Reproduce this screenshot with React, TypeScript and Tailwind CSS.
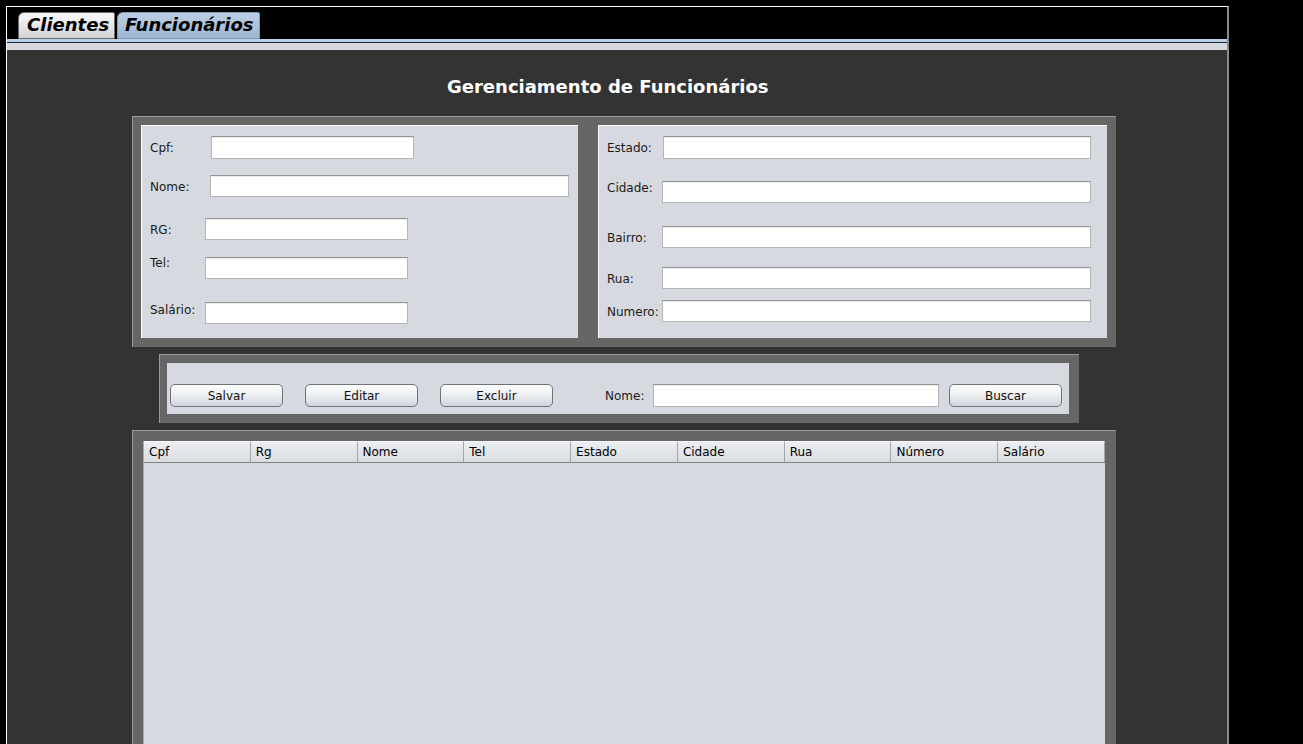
import * as React from 'react';

type Row = {
	label: string;
	row: string;
	labelCls: string;
	inputCls: string;
};

const leftRows: Row[] = [
	{ label: 'Cpf:', row: 'mt-[10px]', labelCls: 'w-[61px] mt-[5px]', inputCls: 'w-[203px] h-[23px]' },
	{ label: 'Nome:', row: 'mt-[16px]', labelCls: 'w-[60px] mt-[5px]', inputCls: 'w-[359px] h-[22px]' },
	{ label: 'RG:', row: 'mt-[21px]', labelCls: 'w-[55px] mt-[5px]', inputCls: 'w-[203px] h-[22px]' },
	{ label: 'Tel:', row: 'mt-[17px]', labelCls: 'w-[55px] -mt-[1px]', inputCls: 'w-[203px] h-[22px]' },
	{ label: 'Salário:', row: 'mt-[23px]', labelCls: 'w-[55px] mt-[1px]', inputCls: 'w-[203px] h-[22px]' }
];

const rightRows: Row[] = [
	{ label: 'Estado:', row: 'mt-[10px]', labelCls: 'w-[56px] mt-[5px]', inputCls: 'w-[428px] h-[23px]' },
	{ label: 'Cidade:', row: 'mt-[22px]', labelCls: 'w-[55px] mt-[0px]', inputCls: 'w-[429px] h-[22px]' },
	{ label: 'Bairro:', row: 'mt-[23px]', labelCls: 'w-[55px] mt-[5px]', inputCls: 'w-[429px] h-[22px]' },
	{ label: 'Rua:', row: 'mt-[19px]', labelCls: 'w-[55px] mt-[5px]', inputCls: 'w-[429px] h-[22px]' },
	{ label: 'Numero:', row: 'mt-[11px]', labelCls: 'w-[55px] mt-[5px]', inputCls: 'w-[429px] h-[22px]' }
];

const columns = ['Cpf', 'Rg', 'Nome', 'Tel', 'Estado', 'Cidade', 'Rua', 'Número', 'Salário'];

const inputBase =
	'border border-[#b5b5b5] border-t-[#939393] bg-white shadow-[inset_0_1px_0_#ececec]';

const buttonBase =
	'h-[23px] w-[113px] rounded-[5px] border border-[#6e737a] bg-linear-to-b from-[#fdfdfd] via-[#eceef1] to-[#d0d4da] pt-[1px] text-center text-[12px] leading-[20px] text-[#111]';

const FormRows: React.FC<{ rows: Row[] }> = ({ rows }) => (
	<>
		{rows.map((r) => (
			<div key={r.label} className={`flex items-start ${r.row}`}>
				<div className={`shrink-0 text-[12px] leading-[14px] text-[#1a1a1a] ${r.labelCls}`}>
					{r.label}
				</div>
				<div className={`${inputBase} ${r.inputCls}`} />
			</div>
		))}
	</>
);

const App: React.FC = () => {
	return (
		<div className="h-[744px] w-[1303px] overflow-hidden bg-black font-['DejaVu_Sans',sans-serif]">
			<div className="ml-[6px] mt-[6px] flex h-[738px] w-[1223px] flex-col border-l border-t border-white border-r-2 border-r-[#8a8a8a]">
				{/* tabs */}
				<div className="flex h-[32px] items-end gap-[2px] pl-[11px]">
					<div className="h-[27px] w-[97px] rounded-tl-[6px] rounded-tr-[2px] border border-[#6b6b6b] bg-linear-to-b from-[#fbfbfb] to-[#d2d3d6] pl-[8px] text-[18px] font-bold italic leading-[24px] text-black">
						Clientes
					</div>
					<div className="h-[27px] w-[143px] rounded-tl-[6px] rounded-tr-[2px] border border-[#7f99b6] bg-linear-to-b from-[#bccfe3] to-[#9db7d3] pl-[7px] text-[18px] font-bold italic leading-[24px] text-black">
						Funcionários
					</div>
				</div>
				<div className="h-[3px] bg-[#b9cfe5]" />
				<div className="h-[1px] bg-[#1e2a38]" />
				<div className="h-[7px] bg-[#d6d9df]" />

				{/* content */}
				<div className="flex flex-1 flex-col bg-[#333333]">
					<div className="pl-[440px] pt-[26px] text-[18px] font-bold leading-[22px] text-white">
						Gerenciamento de Funcionários
					</div>

					<div className="ml-[125px] mt-[18px] flex h-[231px] w-[984px] gap-[20px] border-l border-t border-[#9a9a9a] bg-[#666666] pl-[8px] pt-[8px]">
						<div className="flex h-[213px] w-[437px] flex-col border-l border-t border-white bg-[#d6d9df] pl-[8px]">
							<FormRows rows={leftRows} />
						</div>
						<div className="flex h-[213px] w-[509px] flex-col border-l border-t border-white bg-[#d6d9df] pl-[8px]">
							<FormRows rows={rightRows} />
						</div>
					</div>

					<div className="ml-[152px] mt-[7px] h-[69px] w-[920px] border-l border-t border-[#9a9a9a] bg-[#666666] pl-[7px] pt-[8px]">
						<div className="flex h-[51px] w-[902px] items-start bg-[#d6d9df] pl-[3px] pt-[21px]">
							<div className={buttonBase}>Salvar</div>
							<div className={`${buttonBase} ml-[22px]`}>Editar</div>
							<div className={`${buttonBase} ml-[22px]`}>Excluir</div>
							<div className="ml-[52px] w-[48px] pt-[1px] text-[12px] leading-[23px] text-[#1a1a1a]">Nome:</div>
							<div className={`${inputBase} h-[23px] w-[286px]`} />
							<div className={`${buttonBase} ml-[10px]`}>Buscar</div>
						</div>
					</div>

					<div className="ml-[125px] mt-[7px] flex-1 w-[984px] border-l border-t border-[#9a9a9a] bg-[#666666] pl-[10px] pt-[10px]">
						<div className="h-full w-[962px] border-l border-[#a4abb8] bg-[#d6d9df]">
							<div className="grid grid-cols-9 border-b border-[#7e8288]">
								{columns.map((c) => (
									<div
										key={c}
										className="h-[21px] border-r border-t border-r-[#a2a6ad] border-t-[#f7f8fa] bg-linear-to-b from-[#eceef1] to-[#d9dce1] pl-[5px] text-[12px] leading-[20px] text-black"
									>
										{c}
									</div>
								))}
							</div>
						</div>
					</div>
				</div>
			</div>
		</div>
	);
};

export default App;
